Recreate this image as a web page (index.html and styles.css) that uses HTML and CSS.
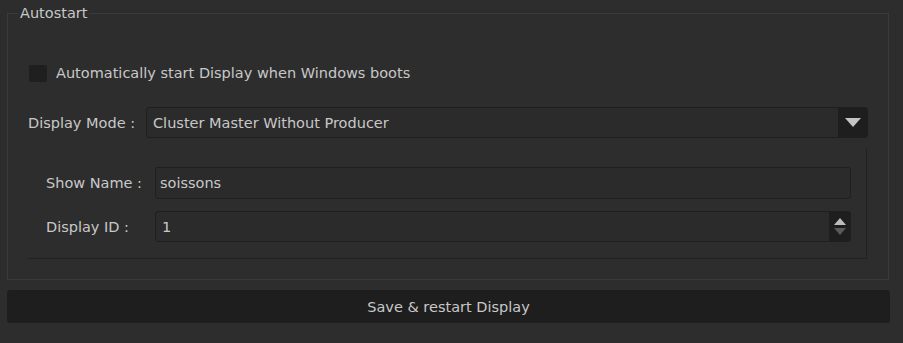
FILE: index.html
```html
<!DOCTYPE html>
<html lang="en">
<head>
    <meta charset="UTF-8">
    <title>Autostart</title>
    <link rel="stylesheet" href="styles.css">
</head>
<body>
    <div class="page">
        <fieldset class="group">
            <legend>Autostart</legend>
            <label class="check-row">
                <span class="checkbox"></span>
                <span>Automatically start Display when Windows boots</span>
            </label>
            <div class="mode-row">
                <span class="mode-label">Display Mode :</span>
                <div class="combo">
                    <span class="combo-value">Cluster Master Without Producer</span>
                    <span class="combo-button">
                        <svg width="16" height="9" viewBox="0 0 16 9"><path d="M0 0 H16 L8 9 Z" fill="#c4c4c4"/></svg>
                    </span>
                </div>
            </div>
            <div class="frame">
                <div class="field-row">
                    <span class="field-label">Show Name :</span>
                    <div class="field">soissons</div>
                </div>
                <div class="field-row">
                    <span class="field-label">Display ID :</span>
                    <div class="field spin">
                        <span>1</span>
                        <span class="spin-buttons">
                            <svg width="12" height="7" viewBox="0 0 12 7"><path d="M6 0 L12 7 H0 Z" fill="#bdbdbd"/></svg>
                            <svg width="12" height="7" viewBox="0 0 12 7"><path d="M0 0 H12 L6 7 Z" fill="#5a5a5a"/></svg>
                        </span>
                    </div>
                </div>
            </div>
        </fieldset>
        <button class="save">Save &amp; restart Display</button>
    </div>
</body>
</html>
```

FILE: styles.css
```css
body {
    margin: 0;
    background: #2d2d2d;
    color: #c8c8c8;
    font-family: "DejaVu Sans", sans-serif;
    font-size: 14.5px;
}
.page {
    padding: 5px 14px 0 7px;
}
.group {
    margin: 0;
    border: 1px solid #3a3a3a;
    padding: 43px 20px 20px 20px;
    min-width: 0;
}
.group legend {
    padding: 0 2px;
    margin-left: -10px;
    line-height: 16px;
}
.check-row {
    display: flex;
    align-items: center;
    gap: 9px;
    height: 18px;
    margin-left: 1px;
}
.checkbox {
    width: 18px;
    height: 17px;
    background: #1f1f1f;
    border-radius: 2px;
}
.mode-row {
    display: flex;
    align-items: center;
    margin-top: 25px;
}
.mode-label {
    width: 118px;
}
.combo {
    flex: 1;
    display: flex;
    height: 29px;
    border: 1px solid #1f1f1f;
    border-radius: 3px;
    background: #2b2b2b;
}
.combo-value {
    flex: 1;
    display: flex;
    align-items: center;
    padding-left: 6px;
}
.combo-button {
    width: 29px;
    background: #1e1e1e;
    display: flex;
    align-items: center;
    justify-content: center;
}
.frame {
    margin: 10px 1px 0 0;
    border-right: 1px solid #222222;
    border-bottom: 1px solid #222222;
    padding: 19px 15px 16px 18px;
    display: flex;
    flex-direction: column;
    gap: 12px;
}
.field-row {
    display: flex;
    align-items: center;
}
.field-label {
    width: 109px;
}
.field {
    flex: 1;
    height: 32px;
    border: 1px solid #1f1f1f;
    border-radius: 3px;
    background: #2b2b2b;
    display: flex;
    align-items: center;
    padding-left: 4px;
    box-sizing: border-box;
}
.field.spin {
    height: 31px;
    padding-left: 6px;
    justify-content: space-between;
}
.spin-buttons {
    width: 21px;
    height: 100%;
    background: #1e1e1e;
    display: flex;
    flex-direction: column;
    align-items: center;
    justify-content: center;
    gap: 3px;
}
.save {
    display: block;
    width: calc(100% + 1px);
    margin-top: 10px;
    height: 33px;
    border: none;
    border-radius: 3px;
    background: #1e1e1e;
    color: #c8c8c8;
    font-family: "DejaVu Sans", sans-serif;
    font-size: 14.5px;
}
```
